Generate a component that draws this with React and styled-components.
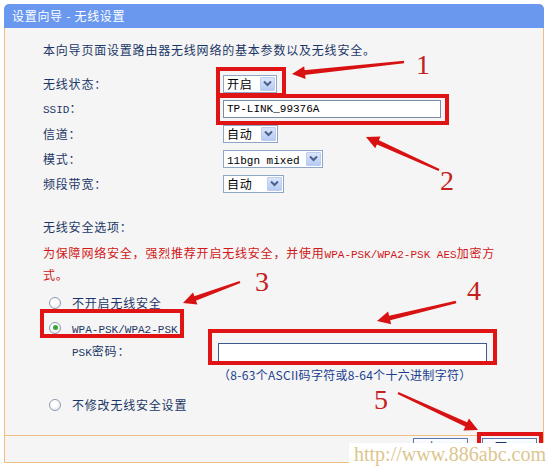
import React from 'react';
import styled, { createGlobalStyle } from 'styled-components';

const Global = createGlobalStyle`
  html, body { margin: 0; padding: 0; background: #fff; }
  body { font-family: "Noto Sans CJK SC", "Noto Sans", sans-serif; }
`;

const Page = styled.div`
  position: relative;
  width: 552px;
  height: 466px;
  overflow: hidden;
  padding: 4px 0 0 4px;
  box-sizing: border-box;
`;

const Wizard = styled.div`
  width: 540px;
`;

const TitleBar = styled.div`
  height: 24px;
  background: #6a98ee;
  border-radius: 5px 5px 0 0;
  color: #fff;
  font-size: 12px;
  line-height: 24px;
  padding-left: 8px;
  letter-spacing: 0.7px;
`;

const Body = styled.div`
  box-sizing: border-box;
  height: 407px;
  background: #f5f5f5;
  border-left: 1px solid #efbf7f;
  border-right: 1px solid #efbf7f;
  padding: 12px 0 0 38px;
  color: #1c3766;
  font-size: 12px;
  letter-spacing: 0.8px;
`;

const Intro = styled.div`
  line-height: 20px;
`;

const FormGrid = styled.div`
  margin-top: 11px;
  display: grid;
  grid-template-columns: 180px 1fr;
  grid-auto-rows: 25px;
  align-items: center;
`;

const Label = styled.div`
  line-height: 20px;
`;

const Mono = styled.span`
  font-family: "Liberation Mono", monospace;
  font-size: ${p => p.$size || 11}px;
  letter-spacing: 0;
`;

const SelectBox = styled.div`
  box-sizing: border-box;
  display: flex;
  align-items: center;
  width: ${p => p.$w}px;
  height: 18px;
  border: 1px solid #8fa6c6;
  background: #fff;
  padding-left: 3px;
  color: #000;
`;

const SelectText = styled.span`
  flex: 1;
  white-space: nowrap;
  overflow: hidden;
`;

const SelectArrow = styled.span`
  box-sizing: border-box;
  width: 15px;
  height: 14px;
  margin-right: 1px;
  display: flex;
  align-items: center;
  justify-content: center;
  background: linear-gradient(#dbe6fb, #b5caf3);
  border: 1px solid #bccdee;
  border-radius: 1px;
`;

const TextInput = styled.div`
  box-sizing: border-box;
  width: ${p => p.$w}px;
  height: ${p => p.$h || 18}px;
  border: 1px solid ${p => p.$border || '#7b8ca6'};
  background: #fff;
  color: #000;
  padding-left: 3px;
  display: flex;
  align-items: center;
`;

const SectionTitle = styled.div`
  margin-top: 21px;
  line-height: 20px;
`;

const Warning = styled.div`
  margin-top: 6px;
  line-height: 19px;
  color: #d01818;
`;

const RadioList = styled.div`
  margin-top: 6px;
  margin-left: 6px;
  display: flex;
  flex-direction: column;
`;

const RadioRow = styled.div`
  height: 25px;
  display: flex;
  align-items: center;
  gap: 11px;
  margin-top: ${p => p.$mt || 0}px;
`;

const RadioDot = styled.span`
  box-sizing: border-box;
  width: 12px;
  height: 12px;
  border-radius: 50%;
  border: 1px solid #8b9bb2;
  background: radial-gradient(circle at 40% 35%, #fff 30%, #dfe3ea);
  display: flex;
  align-items: center;
  justify-content: center;
`;

const RadioMark = styled.span`
  width: 5px;
  height: 5px;
  border-radius: 50%;
  background: #35a535;
`;

const PskRow = styled.div`
  height: 24px;
  display: grid;
  grid-template-columns: 146px 1fr;
  align-items: center;
  padding-left: 23px;
`;

const Hint = styled.div`
  margin-top: 3px;
  margin-left: 169px;
  height: 16px;
  line-height: 16px;
  letter-spacing: 0.3px;
  color: #1a3f8f;
`;

const Footer = styled.div`
  box-sizing: border-box;
  height: 28px;
  background: #f5f5f5;
  border: 1px solid #efbf7f;
  display: flex;
  justify-content: flex-end;
  gap: 14px;
  padding: 2px 6px 0 0;
`;

const Button = styled.div`
  box-sizing: border-box;
  width: 55px;
  height: 22px;
  border: 1px solid #5a77b3;
  background: linear-gradient(#fdfefe, #d7e2f4);
  color: #1c3766;
  font-size: 12px;
  letter-spacing: 5px;
  text-indent: 5px;
  line-height: 16px;
  text-align: center;
`;

const Marker = styled.div`
  position: absolute;
  box-sizing: border-box;
  left: ${p => p.$x}px;
  top: ${p => p.$y}px;
  width: ${p => p.$w}px;
  height: ${p => p.$h}px;
  border: 4px solid #e01414;
  pointer-events: none;
`;

const StepNo = styled.span`
  position: absolute;
  left: ${p => p.$x}px;
  top: ${p => p.$y}px;
  font-family: "Liberation Serif", serif;
  font-size: 28px;
  line-height: 28px;
  color: #c42020;
`;

const ArrowLayer = styled.svg`
  position: absolute;
  left: 0;
  top: 0;
  pointer-events: none;
`;

const Watermark = styled.div`
  position: absolute;
  left: 349px;
  top: 443px;
  right: 0;
  bottom: 0;
  background: #fff;
  padding-left: 5px;
  font-family: "Liberation Serif", serif;
  font-size: 20px;
  line-height: 22px;
  color: #dcc68e;
`;

const Chevron = () => (
  <svg width="9" height="7" viewBox="0 0 9 7">
    <path d="M1 1.5 L4.5 5 L8 1.5" fill="none" stroke="#4a5f8a" strokeWidth="2" />
  </svg>
);

const Select = ({ w, children }) => (
  <SelectBox $w={w}>
    <SelectText>{children}</SelectText>
    <SelectArrow><Chevron /></SelectArrow>
  </SelectBox>
);

const Radio = ({ checked, children, mt }) => (
  <RadioRow $mt={mt}>
    <RadioDot>{checked && <RadioMark />}</RadioDot>
    <span>{children}</span>
  </RadioRow>
);

const arrowShape = ([x1, y1, x2, y2]) => {
  const dx = x2 - x1, dy = y2 - y1;
  const len = Math.hypot(dx, dy);
  const ux = dx / len, uy = dy / len;
  const nx = -uy, ny = ux;
  const L = 13, W = 6.5;
  const bx = x2 - ux * L, by = y2 - uy * L;
  const t0 = 1.2, t1 = 2.4;
  const shaft = [
    [x1 + nx * t0, y1 + ny * t0],
    [bx + ux + nx * t1, by + uy + ny * t1],
    [bx + ux - nx * t1, by + uy - ny * t1],
    [x1 - nx * t0, y1 - ny * t0],
  ];
  const head = [[x2, y2], [bx + nx * W, by + ny * W], [bx - nx * W, by - ny * W]];
  const pts = a => a.map(p => p.map(v => v.toFixed(1)).join(',')).join(' ');
  return { shaft: pts(shaft), head: pts(head) };
};

const arrows = [
  [404, 62, 292, 74],
  [439, 170, 366, 137],
  [240, 282, 183, 303],
  [456, 302, 377, 321],
  [398, 393, 478, 430],
];

export default function App() {
  return (
    <>
      <Global />
      <Page>
        <Wizard>
          <TitleBar>设置向导 - 无线设置</TitleBar>
          <Body>
            <Intro>本向导页面设置路由器无线网络的基本参数以及无线安全。</Intro>
            <FormGrid>
              <Label>无线状态：</Label>
              <Select w={54}>开启</Select>
              <Label><Mono>SSID</Mono>：</Label>
              <TextInput $w={218}><Mono>TP-LINK_99376A</Mono></TextInput>
              <Label>信道：</Label>
              <Select w={55}>自动</Select>
              <Label>模式：</Label>
              <Select w={100}><Mono>11bgn mixed</Mono></Select>
              <Label>频段带宽：</Label>
              <Select w={61}>自动</Select>
            </FormGrid>
            <SectionTitle>无线安全选项：</SectionTitle>
            <Warning>
              为保障网络安全，强烈推荐开启无线安全，并使用<Mono>WPA-PSK/WPA2-PSK AES</Mono>加密方
              <br />
              式。
            </Warning>
            <RadioList>
              <Radio>不开启无线安全</Radio>
              <Radio checked><Mono>WPA-PSK/WPA2-PSK</Mono></Radio>
              <PskRow>
                <Label><Mono>PSK</Mono>密码：</Label>
                <TextInput $w={269} $h={19} $border="#3d5a8e" />
              </PskRow>
              <Hint>（8-63个ASCII码字符或8-64个十六进制字符）</Hint>
              <Radio mt={9}>不修改无线安全设置</Radio>
            </RadioList>
          </Body>
          <Footer>
            <Button>上一步</Button>
            <Button>下一步</Button>
          </Footer>
        </Wizard>

        <Marker $x={216} $y={67} $w={70} $h={30} />
        <Marker $x={216} $y={94} $w={233} $h={31} />
        <Marker $x={40} $y={309} $w={144} $h={29} />
        <Marker $x={208} $y={329} $w={289} $h={36} />
        <Marker $x={477} $y={432} $w={66} $h={40} />

        <ArrowLayer width="552" height="466" viewBox="0 0 552 466">
          {arrows.map((a, i) => {
            const s = arrowShape(a);
            return (
              <g key={i} fill="#d81212">
                <polygon points={s.shaft} />
                <polygon points={s.head} />
              </g>
            );
          })}
        </ArrowLayer>

        <StepNo $x={416} $y={51}>1</StepNo>
        <StepNo $x={440} $y={167}>2</StepNo>
        <StepNo $x={255} $y={268}>3</StepNo>
        <StepNo $x={467} $y={277}>4</StepNo>
        <StepNo $x={374} $y={386}>5</StepNo>

        <Watermark>http://www.886abc.com</Watermark>
      </Page>
    </>
  );
}
